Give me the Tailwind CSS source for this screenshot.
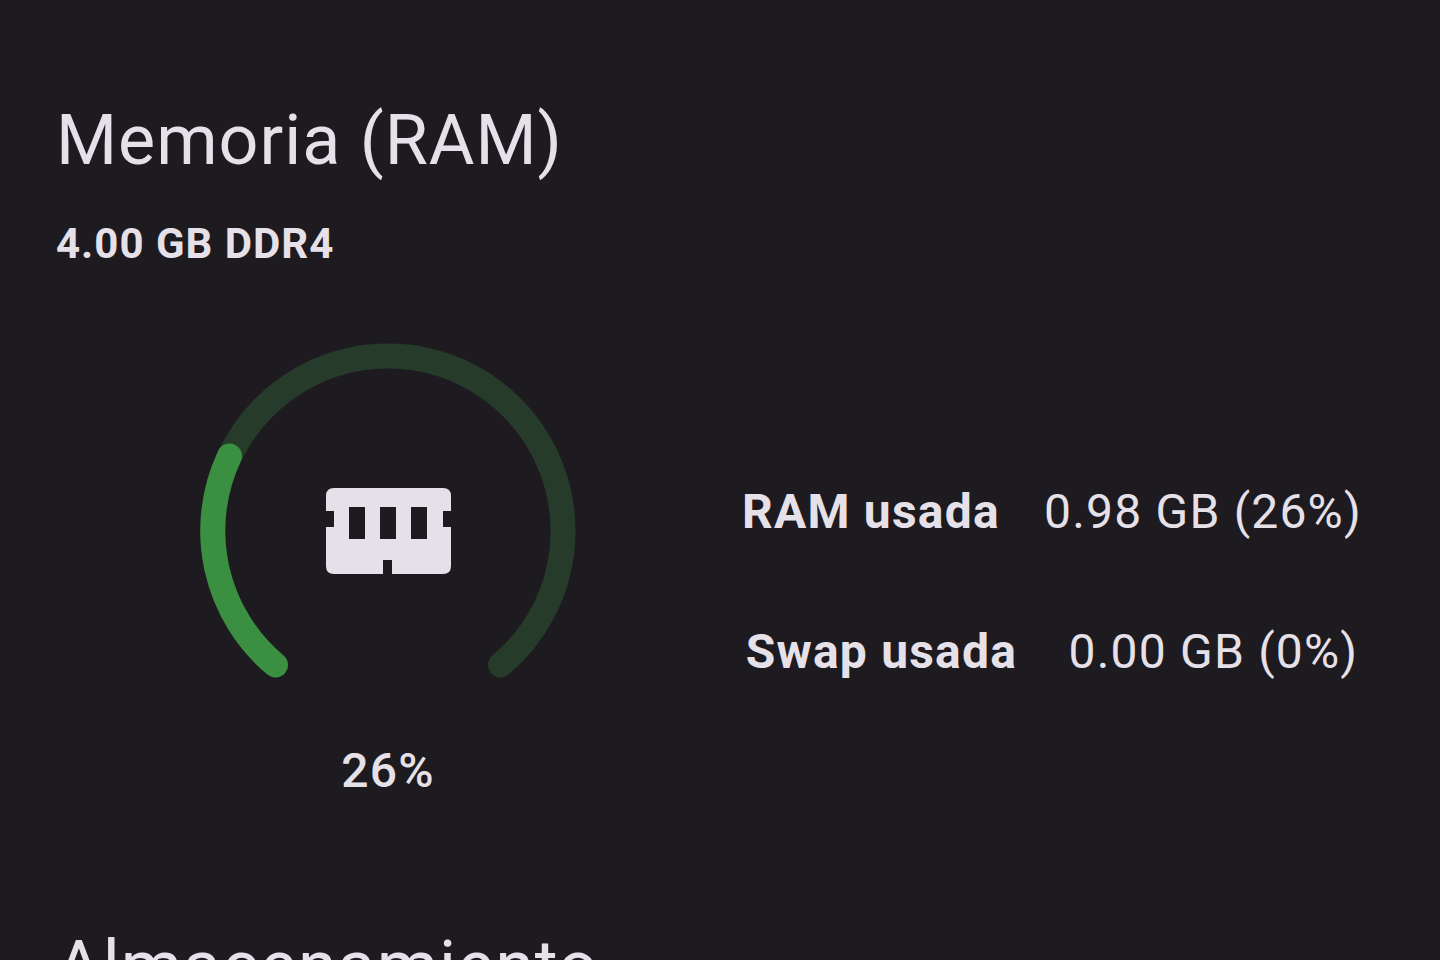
<!DOCTYPE html>
<html lang="es">
<head>
    <meta charset="UTF-8">
    <meta name="viewport" content="width=device-width, initial-scale=1.0">
    <title>Memoria (RAM)</title>
    <script src="https://cdn.jsdelivr.net/npm/@tailwindcss/browser@4"></script>
</head>
<body class="bg-[#1d1a20] text-[#e6e1e9] font-[Roboto,sans-serif] h-screen overflow-hidden">
    <main class="px-14 pt-[98px]">
        <!-- Memory -->
        <section>
            <h2 class="text-[70px] leading-[84px] tracking-[1px]">Memoria (RAM)</h2>
            <p class="mt-[34px] text-[42px] leading-[56px] font-bold tracking-[1px]">4.00 GB DDR4</p>

            <div class="mt-16 grid grid-cols-2 items-center">
                <div class="flex flex-col items-center pb-7">
                    <!-- Usage gauge, 280 degree arc -->
                    <div class="grid place-items-center">
                        <svg class="col-start-1 row-start-1 size-[390px]" viewBox="0 0 390 390" fill="none" stroke-width="25" stroke-linecap="round">
                            <path d="M82.5 329A175 175 0 1 1 307.5 329" stroke="#263b29"/>
                            <path d="M82.5 329A175 175 0 0 1 36.5 120" stroke="#3b8f41"/>
                        </svg>
                        <svg class="col-start-1 row-start-1 w-[125px] h-[86px]" viewBox="0 0 125 86" fill="#e6e1e9">
                            <path fill-rule="evenodd" d="M8 0H117Q125 0 125 8V23H117V39H125V78Q125 86 117 86H66V72H57V86H8Q0 86 0 78V39H8V23H0V8Q0 0 8 0ZM23 19V51H39V19ZM54 19V51H70V19ZM85 19V51H101V19Z"/>
                        </svg>
                    </div>
                    <p class="mt-4 text-[48px] leading-[58px] font-medium tracking-wide">26%</p>
                </div>

                <dl class="flex flex-col gap-[82px] text-[48px] leading-[58px] tracking-wide">
                    <div class="flex justify-around">
                        <dt class="font-bold">RAM usada</dt>
                        <dd>0.98 GB (26%)</dd>
                    </div>
                    <div class="flex justify-around">
                        <dt class="font-bold">Swap usada</dt>
                        <dd>0.00 GB (0%)</dd>
                    </div>
                </dl>
            </div>
        </section>

        <!-- Storage -->
        <section class="mt-24">
            <h2 class="text-[70px] leading-[84px] tracking-[1px]">Almacenamiento</h2>
        </section>
    </main>
</body>
</html>
